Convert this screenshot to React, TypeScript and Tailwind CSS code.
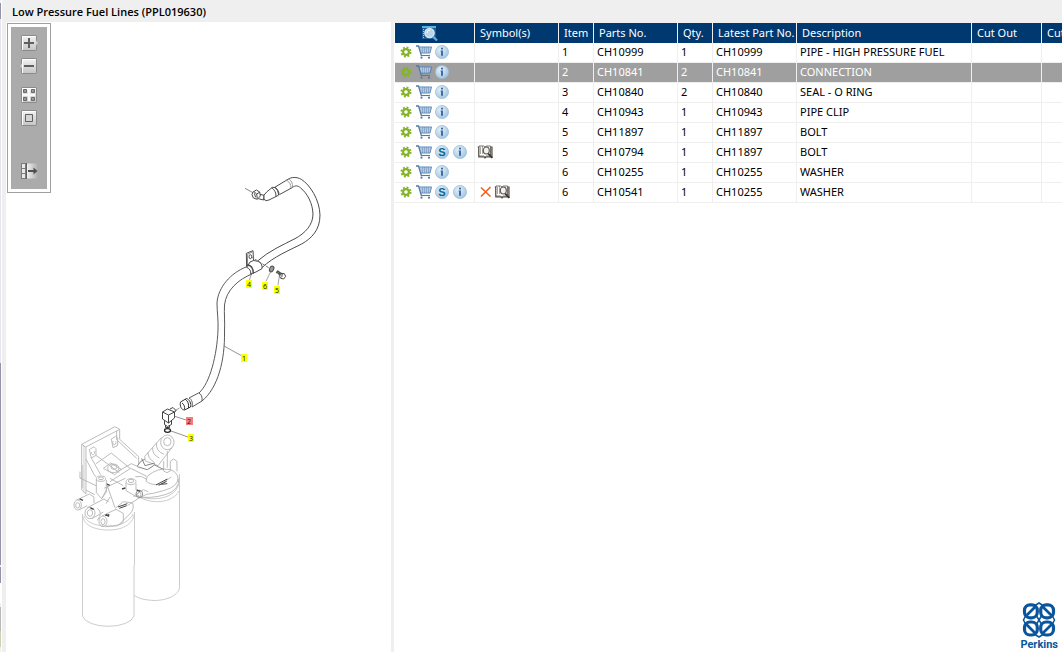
import { useState } from 'react';
import type { ReactNode } from 'react';

interface Part {
  id: number;
  item: string;
  partNo: string;
  qty: string;
  latestPartNo: string;
  description: string;
  service?: boolean;
  symbols?: ('cross' | 'book')[];
}

const parts: Part[] = [
  { id: 1, item: '1', partNo: 'CH10999', qty: '1', latestPartNo: 'CH10999', description: 'PIPE - HIGH PRESSURE FUEL' },
  { id: 2, item: '2', partNo: 'CH10841', qty: '2', latestPartNo: 'CH10841', description: 'CONNECTION' },
  { id: 3, item: '3', partNo: 'CH10840', qty: '2', latestPartNo: 'CH10840', description: 'SEAL - O RING' },
  { id: 4, item: '4', partNo: 'CH10943', qty: '1', latestPartNo: 'CH10943', description: 'PIPE CLIP' },
  { id: 5, item: '5', partNo: 'CH11897', qty: '1', latestPartNo: 'CH11897', description: 'BOLT' },
  { id: 6, item: '5', partNo: 'CH10794', qty: '1', latestPartNo: 'CH11897', description: 'BOLT', service: true, symbols: ['book'] },
  { id: 7, item: '6', partNo: 'CH10255', qty: '1', latestPartNo: 'CH10255', description: 'WASHER' },
  { id: 8, item: '6', partNo: 'CH10541', qty: '1', latestPartNo: 'CH10255', description: 'WASHER', service: true, symbols: ['cross', 'book'] },
];

const columns = ['Symbol(s)', 'Item', 'Parts No.', 'Qty.', 'Latest Part No.', 'Description', 'Cut Out', 'Cut In'];

const callouts = [
  { item: '1', x: 244, y: 358 },
  { item: '2', x: 189, y: 421 },
  { item: '3', x: 191, y: 438 },
  { item: '4', x: 249, y: 284 },
  { item: '6', x: 265, y: 286 },
  { item: '5', x: 277, y: 290 },
];

const GearIcon = () => (
  <svg width="12" height="12" viewBox="0 0 12 12" fill="none">
    <circle cx="6" cy="6" r="4.5" stroke="#86b32d" strokeWidth="2" strokeDasharray="1.9 1.63" />
    <circle cx="6" cy="6" r="2.9" stroke="#86b32d" strokeWidth="2.2" />
  </svg>
);

const CartIcon = () => (
  <svg width="16" height="14" viewBox="0 0 16 14" fill="none" stroke="#4f7cad" className="-mr-px">
    <path d="M3.500 2H15l-1.500 6H5z" fill="#d3e0ed" stroke="none" />
    <path d="M3.500 4H15M4 6h10M6.500 2v6M8.500 2v6M10.500 2v6M12.500 2v6" stroke="#7d9fc6" strokeWidth=".7" />
    <path d="M0 1h2.500L5.500 11" strokeWidth="1.300" />
    <path d="M3 2h12.500L14 8H5" strokeWidth=".9" />
    <path d="M5 10.500h9" strokeWidth="1.100" />
    <circle cx="5.500" cy="12.700" r="1.100" fill="#4f7cad" stroke="none" />
    <circle cx="13" cy="12.700" r="1.100" fill="#4f7cad" stroke="none" />
  </svg>
);

const Disc = ({ id, children }: { id: string; children: ReactNode }) => (
  <svg width="14" height="14" viewBox="0 0 14 14">
    <defs>
      <radialGradient id={id} cx="40%" cy="35%" r="65%">
        <stop offset="0" stopColor="#e6f1f9" />
        <stop offset="1" stopColor="#a3c5e0" />
      </radialGradient>
    </defs>
    <circle cx="7" cy="7" r="6.6" fill={`url(#${id})`} stroke="#9dbfda" strokeWidth=".7" />
    {children}
  </svg>
);

const InfoIcon = () => (
  <Disc id="disc-info">
    <path d="M6 2.800h2v1.700H6zM5.500 5.500H8v5.300H6V6.500h-.5z" fill="#3c6ca6" />
  </Disc>
);

const ServiceIcon = () => (
  <Disc id="disc-service">
    <text
      x="7"
      y="11"
      textAnchor="middle"
      className="fill-[#0b6797] text-[11px] font-bold [font-family:'Liberation_Sans',sans-serif]"
    >
      S
    </text>
  </Disc>
);

const CrossIcon = () => (
  <svg width="14" height="12" viewBox="0 0 14 12" fill="none" stroke="#f26522" strokeWidth="1.700">
    <path d="M3 1.500l9.500 9M12.500 1L3 10.500" />
  </svg>
);

const BookIcon = () => (
  <svg width="16" height="14" viewBox="0 0 16 14" fill="none" stroke="#55524a" className="-ml-px mr-px">
    <path d="M.8 2h1v10H7l1 1 1-1h6V2h-1" fill="#c9c5b5" strokeWidth="1.200" />
    <path d="M2 1h4.500L8 2l1.500-1h4v10h-4L8 12l-1.500-1H2z" fill="#fff" strokeWidth=".8" />
    <path d="M5.500 1v8M3.500 2v7" strokeWidth=".5" />
    <ellipse cx="9.300" cy="5.500" rx="3" ry="3.500" fill="#f2f2ee" strokeWidth="1.100" />
    <path d="M11.300 8.700l4 4.300" stroke="#333" strokeWidth="1.700" />
  </svg>
);

const PreviewIcon = () => (
  <svg width="18" height="16" viewBox="0 0 18 16" fill="none">
    <path d="M1 1h14v13H1z" fill="#1c5c96" />
    <path d="M1 1h14v2H1z" fill="#53b4e3" />
    <path d="M2.500 4v10" stroke="#9ed0ec" strokeDasharray="1 1" />
    <circle cx="8.500" cy="8" r="4.600" fill="#b8d6e8" stroke="#d8e6ee" strokeWidth="1.500" />
    <path d="M6 8a3 3 0 013-3" stroke="#fff" />
    <path d="M12 11.500l4 4" stroke="#5eaee0" strokeWidth="2.200" />
  </svg>
);

const ToolFace = ({ children }: { children?: ReactNode }) => (
  <>
    <defs>
      <linearGradient id="tool-face" x1="0" y1="0" x2="0" y2="1">
        <stop offset="0" stopColor="#f2f2f2" />
        <stop offset="1" stopColor="#c6c6c6" />
      </linearGradient>
    </defs>
    <rect x="2.500" y=".5" width="15" height="15" rx="1" fill="none" stroke="#8b8b8b" />
    {children}
    <rect x="3" y="1" width="14" height="14" rx="1" fill="url(#tool-face)" stroke="none" />
    <path d="M3.500 15V1.500h13" stroke="#fff" fill="none" />
  </>
);

const tools: { label: string; spacing: string; icon: ReactNode }[] = [
  {
    label: 'Zoom in',
    spacing: 'mt-2',
    icon: (
      <>
        <ToolFace><path d="M17 5l2.500 3L17 11z" fill="#e2e2e2" stroke="#8b8b8b" strokeWidth=".6" /></ToolFace>
        <path d="M5 8h10M10 3v10" stroke="#5f5f5f" strokeWidth="2" />
      </>
    ),
  },
  {
    label: 'Zoom out',
    spacing: 'mt-[7px]',
    icon: (
      <>
        <ToolFace><path d="M3 5L.5 8 3 11z" fill="#e2e2e2" stroke="#8b8b8b" strokeWidth=".6" /></ToolFace>
        <path d="M5 8h10" stroke="#5f5f5f" strokeWidth="2" />
      </>
    ),
  },
  {
    label: 'Fit to window',
    spacing: 'mt-[13px]',
    icon: (
      <>
        <ToolFace />
        <path d="M10 2v12M4 8h12" stroke="#f8f8f8" strokeWidth="2" />
        <g fill="#999" stroke="#6a6a6a">
          <path d="M4.500 2.500h3v3h-3zM12.500 2.500h3v3h-3zM4.500 10.500h3v3h-3zM12.500 10.500h3v3h-3z" />
        </g>
      </>
    ),
  },
  {
    label: 'Actual size',
    spacing: 'mt-[7px]',
    icon: (
      <>
        <ToolFace />
        <path d="M6.500 4.500h7v7h-7z" fill="#d5d5d5" stroke="#5f5f5f" />
      </>
    ),
  },
  {
    label: 'Hide panel',
    spacing: 'mt-[37px]',
    icon: (
      <>
        <defs>
          <linearGradient id="tool-fade">
            <stop offset="0" stopColor="#f0f0f0" />
            <stop offset="1" stopColor="#ababab" />
          </linearGradient>
        </defs>
        <path d="M8 .5h11v15H8z" fill="url(#tool-fade)" />
        <path d="M2 0h5v16H2z" fill="#7c7c7c" />
        <path d="M3 1h3v4H3zM3 6h3v4H3zM3 11h3v4H3z" fill="#e8e8e8" />
        <path d="M7.500 0v16" stroke="#5f5f5f" />
        <path d="M9 8h7" stroke="#4f4f4f" strokeWidth="2" />
        <path d="M14.500 4.500L18.500 8l-4 3.500z" fill="#4f4f4f" />
      </>
    ),
  },
];

const Toolbar = () => (
  <div className="ml-px mt-px flex-none self-start border border-[#a0a0a0] bg-white p-[3px]">
    <div className="flex h-[162px] w-9 flex-col items-center bg-[#ababab]">
      {tools.map((tool) => (
        <button key={tool.label} type="button" aria-label={tool.label} className={tool.spacing}>
          <svg width="20" height="16" viewBox="0 0 20 16" fill="none" className="block">
            {tool.icon}
          </svg>
        </button>
      ))}
    </div>
  </div>
);

const Diagram = ({ selected }: { selected: string }) => (
  <svg width="340" height="620" viewBox="51 22 340 620" fill="none" className="flex-none">
    {/* Filter canisters */}
    <g stroke="#cccccc" strokeWidth="1">
      <path d="M82.500 514v102a26 12 0 0051.500 0V565M134.500 565V512" />
      <path d="M134 595c3 3 10 5 20 5.500 14 0 25-6 25.500-13V474" />
      <path d="M82.500 514c0 10 10 16 26 16s25.500-7 26-18" />
      <path d="M136 495c8 5 37 8 43-11M139 497c12 7 33 7 40-6" />
      <path d="M84 516c3 7 12 10 24 10 13 0 22-5 25-12" />
    </g>

    {/* Filter head and bracket */}
    <g transform="translate(60 415) scale(.3333)" stroke="#b4b4b4" strokeWidth="2.700">
      <path d="M65 88L165 35l14 8v30l57 52v22M65 88l12 8 93-48v26l60 56M65 88v137l13 12V96M170 48l9-5M60 170v20h5" />
      <path d="M72 92v138M68 150v70" strokeWidth="2" />
      <path d="M88 104l14-9 6 6v20l-14 8zM94 111a5 6 0 108-3M154 72l13-8 6 5v23l-14 6zM160 78a5 6 0 107 1" />
      <path d="M78 132l24 46 6 8M94 129l28 50M108 121l70 52M108 146l46-32 56 46M130 160l22-16 32 19-20 16z" />
      <ellipse cx="160" cy="160" rx="17" ry="13" />
      <ellipse cx="162" cy="156" rx="9" ry="7" />
      <path d="M176 168l38-22 18 8M150 190l40 22M62 190l46 22M78 225l26 14" />
      {/* Outlet neck */}
      <path d="M304 68l-50 56 2 14 38 14 42-54" />
      <ellipse cx="322" cy="82" rx="20" ry="22" />
      <ellipse cx="322" cy="80" rx="11" ry="12" />
      <path d="M290 84q-4 24 22 34M278 97q-2 22 20 32M264 111q0 20 18 30" />
      <path d="M322 108v50M311 138v30l10 5 10-5v-30l10-6 10 7v30" />
      <path d="M245 130l10 22 30-8M232 153q10-18 22-20M232 155l30 9 22-14 28 14" stroke="#777" />
      {/* Cover */}
      <path d="M262 184q30-28 70-20 22 10 22 26 0 24-40 36l-30 8q-26 2-42 12l-40 26M262 184l-4 14q14 14 44 10l32-22M357 190q0 36-38 48-50 16-98 5" />
      <path d="M150 200l62-40 48 24M132 220l64-30M226 185q20-5 34 8M220 244l30-20 14 6" />
      {/* Ports */}
      <ellipse cx="123" cy="191" rx="14" ry="8" />
      <ellipse cx="123" cy="190" rx="8" ry="4" />
      <path d="M109 193v40l16 18 14-20v-36M125 251l20-38M139 204l26 74M150 246l-12 20" />
      <ellipse cx="213" cy="200" rx="15" ry="9" />
      <ellipse cx="213" cy="198" rx="8" ry="5" />
      <path d="M198 203v24l28 16M228 205v20" />
      <ellipse cx="238" cy="237" rx="10" ry="11" stroke="#888" />
      <ellipse cx="238" cy="238" rx="5" ry="6" />
      <ellipse cx="53" cy="270" rx="11" ry="15" />
      <ellipse cx="53" cy="271" rx="6" ry="8" />
      <path d="M50 255l38-18 14 9v18M58 284l24-12" />
      <ellipse cx="90" cy="294" rx="15" ry="17" />
      <ellipse cx="90" cy="294" rx="8" ry="10" />
      <path d="M82 278l50-26 14 8M96 311l34-20M112 280q18 14 0 36" />
      <ellipse cx="129" cy="319" rx="12" ry="16" />
      <ellipse cx="129" cy="320" rx="6" ry="9" />
      <path d="M126 303l42-20 22 12v24q-6 10-20 14l-34 2M176 330l34-34q14-14 8-32l-28-4-24 20" />
      <path d="M59 252l10 4M91 279l10 4M136 302l12-3M137 298l10 6M141 207l8 4M186 222l10-3M230 225l10 4" stroke="#444" strokeWidth="4" />
      <path d="M174 276l28-10M178 280l22-8M288 210l34-18M296 211l24-12M304 208l18-2" stroke="#444" strokeWidth="3" />
    </g>

    {/* Fuel pipe */}
    <g transform="translate(230 170) scale(.3333)" stroke="#4a4a4a" strokeWidth="3">
      <path d="M45 55l24 13" stroke="#888" />
      <path d="M69 66l10-6 10 6 2 12-9 10-12-4-4-10zM72 65l8 7 10-6M80 72l2 14M73 70l4 12" />
      <path d="M90 73l13 3-2 14-16-4M103 74l-2 12 3 4" />
      <path d="M102 88q-4-14 8-22l17-14q12-2 16 8 7 10 2 16l-28 14q-10 5-15-2z" fill="#fff" />
      <path d="M125 53q14 10 13 27M134 51q12 10 12 24" />
      <path d="M134 52l40-24C184 21 200 20 214 28C240 44 269 90 270 135C270 180 245 205 215 222C180 240 130 260 96 293" />
      <path d="M148 74l40-22C196 46 204 46 212 54C232 70 248 100 249 132C249 165 225 190 195 206C160 224 115 244 84 272" />
      <path d="M169 30q14 8 14 24M175 26q14 8 13 26" stroke="#999" />
      {/* Clip */}
      <path d="M50 292l-1-42 20-8 2 34" />
      <path d="M53 290l-1-37 15-7" stroke="#888" />
      <ellipse cx="61" cy="260" rx="4" ry="6" />
      <path d="M50 292l10-16q10-8 24-2 14 6 12 22l-18 10-16 6q2-14-12-20z" fill="#fff" />
      <path d="M50 285q20 0 20 26" strokeWidth="4" />
      <path d="M64 261l52 32" stroke="#777" strokeDasharray="10 3" />
      {/* Washer and bolt */}
      <ellipse cx="125" cy="297" rx="6" ry="9" transform="rotate(25 125 297)" fill="#999" />
      <path d="M140 306l12 10M143 303l13 9M139 309l5-7M145 313l5-7" strokeWidth="4" />
      <path d="M153 310l10 1 4 8-6 8-9-2-4-8zM157 312l-2 10" />
      <path d="M57 334l8-24M108 334l14-29M144 346l4-28" stroke="#777" strokeWidth="2" />
    </g>
    <g stroke="#5a5a5a">
      <path d="M246 267C231 273 218 287 217 303C217 312 218.500 320 218 330C217 355 210 383 199 393" />
      <path d="M252 274C239 279 226 290 224.500 305C224 314 225 322 224.500 332C225 360 218 388 202 401" />
      <path d="M189 398l9.500-5c3 1 4 4 3.500 8l-10 6M189 398c3 1 4 6 3 9" fill="#fff" />
      <path d="M180.500 402l6-3.500c3 1 5 5 4 8.500l-6 3c-3 0-5-4-4-8zM182 403c2 1 3 4 2.500 6.500M185 399c3 2 4 5 3.500 9" stroke="#333" />
      <path d="M174.500 411l5-3" stroke="#999" />
      {/* Elbow */}
      <path d="M162.500 412l5-3 7 3v6l-6 5-6-4zM162.500 412l6 3 6-3M168.500 415v8M170 409l3-1.500 3 3-2 2.500M164.500 420.500v4l3 2 4-2v-3.500M165.500 425v2.500h4V425" stroke="#444" />
      <ellipse cx="167.500" cy="430.500" rx="3" ry="1.800" stroke="#222" strokeWidth="1.300" />
    </g>
    <path d="M224 346l18 10M174 416l12 4M171 431l17 6" stroke="#777" strokeWidth=".8" />

    {callouts.map((callout) => (
      <g key={callout.item}>
        <rect
          x={callout.x - 3}
          y={callout.y - 4}
          width={callout.item === '2' ? 7 : 6}
          height="8"
          fill={callout.item === selected ? '#f47c7c' : '#ffff00'}
        />
        <text x={callout.x} y={callout.y + 3} textAnchor="middle" fontSize="7" fill="#222">
          {callout.item}
        </text>
      </g>
    ))}
  </svg>
);

const PerkinsLogo = () => (
  <div className="mr-1 mt-auto flex flex-col items-center self-end text-[#0a559c]">
    <svg width="34" height="36" viewBox="0 0 34 36" fill="none" stroke="currentColor" strokeWidth="3.200">
      <rect x="2.500" y="2.800" width="12.800" height="13" rx="5.500" />
      <rect x="18.700" y="2.800" width="12.800" height="13" rx="5.500" />
      <rect x="2.500" y="20" width="12.800" height="13" rx="5.500" />
      <rect x="18.700" y="20" width="12.800" height="13" rx="5.500" />
      <path d="M4 14L14 4M20 4l10 10M4 22l10 10M20 32l10-10" strokeWidth="2.800" />
      <path d="M13 3.500L17 1l4 2.500M13 32.500l4 2.500 4-2.500M3.500 14L1.500 18l2 4M30.500 14l2 4-2 4" strokeWidth="1.500" />
      <path d="M14 13l6 10M20 13l-6 10" strokeWidth="1.500" />
    </svg>
    <span className="text-[11px] font-bold leading-[14px] [font-family:Roboto,sans-serif]">Perkins</span>
  </div>
);

const App = () => {
  const [selectedId, setSelectedId] = useState(2);
  const selected = parts.find((part) => part.id === selectedId);

  return (
    <div className="flex h-screen overflow-hidden bg-[#efefef] text-[11px] text-black [font-family:'Noto_Sans',sans-serif]">
      {/* Edge of the navigation pane */}
      <div className="flex w-0.5 flex-none flex-col border-r border-white">
        <div className="mt-[3px] h-4 bg-[#9492a8]" />
        <div className="h-[344px] bg-[#e6e4f0]" />
        <div className="h-[202px] bg-[#9492a8]" />
        <div className="mt-0.5 h-4 bg-[#9492a8]" />
        <div className="h-5 bg-white" />
        <div className="mt-1 h-6 bg-[#b8b8b8]" />
        <div className="h-4 bg-[#d0d0b0]" />
      </div>

      <div className="flex min-w-0 flex-1 flex-col pl-1">
        <h1 className="h-[22px] flex-none pl-1.5 pt-[3px] text-[11px] font-semibold leading-[18px] [font-family:'Open_Sans',sans-serif]">
          Low Pressure Fuel Lines (PPL019630)
        </h1>

        <div className="flex min-h-0 flex-1">
          <section className="flex flex-none overflow-hidden bg-white">
            <Toolbar />
            <Diagram selected={selected ? selected.item : ''} />
          </section>

          <section className="ml-[3px] mt-px flex min-w-0 flex-1 flex-col overflow-hidden bg-white pl-px">
            <table className="w-[731px] table-fixed border-collapse whitespace-nowrap text-left">
              <colgroup>
                <col className="w-20" />
                <col className="w-[84px]" />
                <col className="w-[35px]" />
                <col className="w-[84px]" />
                <col className="w-[35px]" />
                <col className="w-[84px]" />
                <col className="w-[175px]" />
                <col className="w-[70px]" />
                <col className="w-[84px]" />
              </colgroup>
              <thead>
                <tr className="h-5 bg-[#003870] text-white">
                  <th className="p-0 shadow-[inset_-1px_0_#efefef]">
                    <button type="button" aria-label="Preview" className="ml-[26px] block">
                      <PreviewIcon />
                    </button>
                  </th>
                  {columns.map((column) => (
                    <th key={column} className="p-0 pl-[5px] font-normal leading-5 shadow-[inset_-1px_0_#efefef]">
                      {column}
                    </th>
                  ))}
                </tr>
              </thead>
              <tbody>
                {parts.map((part) => (
                  <tr
                    key={part.id}
                    onClick={() => setSelectedId(part.id)}
                    className={part.id === selectedId ? 'h-5 bg-[#9f9f9f] text-white' : 'h-5'}
                  >
                    <td className="p-0 shadow-[inset_-1px_-1px_#efefef]">
                      <div className="flex items-center gap-1 pb-0.5 pl-[5px]">
                        <button type="button" aria-label="Options"><GearIcon /></button>
                        <button type="button" aria-label="Add to cart"><CartIcon /></button>
                        {part.service && <button type="button" aria-label="Service"><ServiceIcon /></button>}
                        <button type="button" aria-label="Information"><InfoIcon /></button>
                      </div>
                    </td>
                    <td className="p-0 shadow-[inset_-1px_-1px_#efefef]">
                      <div className="flex items-center gap-[3px] pb-0.5 pl-[3px]">
                        {part.symbols?.map((symbol) =>
                          symbol === 'cross' ? <CrossIcon key={symbol} /> : <BookIcon key={symbol} />
                        )}
                      </div>
                    </td>
                    {[part.item, part.partNo, part.qty, part.latestPartNo, part.description, '', ''].map((value, index) => (
                      <td key={index} className="p-0 pb-0.5 pl-[3px] leading-[18px] shadow-[inset_-1px_-1px_#efefef]">
                        {value}
                      </td>
                    ))}
                  </tr>
                ))}
              </tbody>
            </table>

            <PerkinsLogo />
          </section>
        </div>
      </div>
    </div>
  );
};

export default App;
